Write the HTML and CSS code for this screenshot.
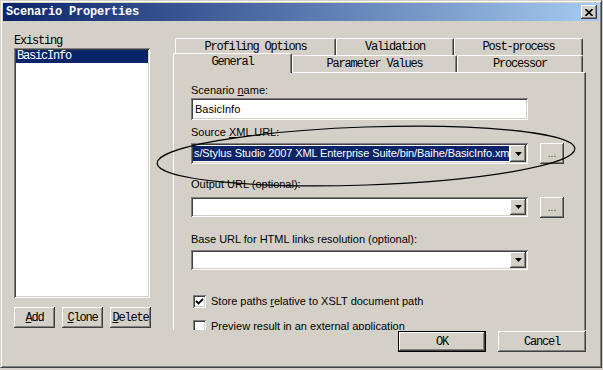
FILE: index.html
```html
<!DOCTYPE html>
<html lang="en">
<head>
  <meta charset="UTF-8">
  <title>Scenario Properties</title>
  <link rel="stylesheet" href="styles.css">
</head>
<body>
  <div class="window">
    <div class="titlebar">
      <span class="title">Scenario Properties</span>
      <button class="close-btn" type="button">
        <svg width="8" height="7" viewBox="0 0 8 7"><path d="M0.5 0 L7.5 7 M7.5 0 L0.5 7" stroke="#000" stroke-width="1.6"/></svg>
      </button>
    </div>

    <div class="content">
      <div class="scenarios">
        <div class="list-label">Existing</div>
        <div class="listbox">
          <div class="list-item selected">BasicInfo</div>
        </div>
        <div class="list-buttons">
          <button class="btn btn-small" type="button"><u>A</u>dd</button>
          <button class="btn btn-small" type="button"><u>C</u>lone</button>
          <button class="btn btn-small" type="button"><u>D</u>elete</button>
        </div>
      </div>

      <div class="props">
        <div class="tab-row tab-row-back">
          <div class="tab tab-profiling">Profiling Options</div>
          <div class="tab tab-validation">Validation</div>
          <div class="tab tab-post">Post-process</div>
        </div>
        <div class="tab-row tab-row-front">
          <div class="tab tab-general active">General</div>
          <div class="tab tab-params">Parameter Values</div>
          <div class="tab tab-processor">Processor</div>
        </div>

        <div class="panel">
          <div class="field-label">Scenario <u>n</u>ame:</div>
          <div class="textbox">BasicInfo</div>

          <div class="field-label label-source">Source <u>X</u>ML URL:</div>
          <div class="combo-row row-source">
            <div class="combo combo-tall">
              <div class="combo-text"><span class="selection">s/Stylus Studio 2007 XML Enterprise Suite/bin/Baihe/BasicInfo.xml</span></div>
              <div class="combo-arrow"><svg width="7" height="4" viewBox="0 0 7 4"><path d="M0 0 H7 L3.5 4 Z" fill="#000"/></svg></div>
            </div>
            <button class="btn btn-browse" type="button">...</button>
          </div>

          <div class="field-label label-output">Output URL (optional):</div>
          <div class="combo-row row-output">
            <div class="combo">
              <div class="combo-text"></div>
              <div class="combo-arrow"><svg width="7" height="4" viewBox="0 0 7 4"><path d="M0 0 H7 L3.5 4 Z" fill="#000"/></svg></div>
            </div>
            <button class="btn btn-browse" type="button">...</button>
          </div>

          <div class="field-label label-base">Base URL for HTML links resolution (optional):</div>
          <div class="combo-row row-base">
            <div class="combo">
              <div class="combo-text"></div>
              <div class="combo-arrow"><svg width="7" height="4" viewBox="0 0 7 4"><path d="M0 0 H7 L3.5 4 Z" fill="#000"/></svg></div>
            </div>
          </div>

          <div class="check-row check-store">
            <span class="checkbox"><svg width="9" height="9" viewBox="0 0 9 9"><path d="M1 4 L3.5 6.5 L8 2" stroke="#000" stroke-width="1.8" fill="none"/></svg></span>
            <span>Store paths <u>r</u>elative to XSLT document path</span>
          </div>
          <div class="check-row check-preview">
            <span class="checkbox"></span>
            <span>Preview result in an external application</span>
          </div>
        </div>
      </div>
    </div>

    <div class="footer">
      <button class="btn btn-wide btn-default" type="button">OK</button>
      <button class="btn btn-wide" type="button">Cancel</button>
    </div>
  </div>

  <!-- hand-drawn annotation around the source URL -->
  <svg class="annotation" width="603" height="370" viewBox="0 0 603 370">
    <ellipse cx="366" cy="156" rx="209" ry="29" transform="rotate(-2 366 156)" fill="none" stroke="#000" stroke-width="1.2"/>
  </svg>
</body>
</html>
```

FILE: styles.css
```css
body {
  margin: 0;
  background: #d4d0c8;
  font-family: "Liberation Sans", Arial, sans-serif;
  font-size: 11px;
  color: #000;
}
.window {
  width: 602px;
  height: 368px;
  box-sizing: border-box;
  padding: 2px;
  border: 1px solid;
  border-color: #d4d0c8 #404040 #404040 #d4d0c8;
  box-shadow: inset 1px 1px #fff, inset -1px -1px #808080;
  display: flex;
  flex-direction: column;
}
.titlebar {
  height: 18px;
  flex: none;
  display: flex;
  align-items: center;
  justify-content: space-between;
  padding: 0 2px 0 3px;
  background: linear-gradient(to right, #0a246a, #a6caf0);
}
.title {
  font-family: "Liberation Mono", monospace;
  font-weight: bold;
  font-size: 12px;
  letter-spacing: -0.2px;
  color: #fff;
}
.close-btn {
  width: 16px;
  height: 14px;
  padding: 0;
  border: none;
  background: #d4d0c8;
  display: flex;
  align-items: center;
  justify-content: center;
  box-shadow: inset -1px -1px #404040, inset 1px 1px #fff, inset -2px -2px #808080;
}

/* classic 3d bits */
.btn {
  padding: 0;
  border: none;
  background: #d4d0c8;
  color: #000;
  font-family: "Liberation Mono", monospace;
  font-size: 12px;
  letter-spacing: -1.2px;
  box-shadow: inset -1px -1px #404040, inset 1px 1px #fff, inset -2px -2px #808080;
}

.content {
  height: 309px;
  flex: none;
  display: flex;
}
.scenarios {
  width: 137px;
  margin-left: 11px;
  padding-top: 13px;
}
.list-label {
  height: 14px;
  line-height: 14px;
  font-family: "Liberation Mono", monospace;
  font-size: 12px;
  letter-spacing: -1.2px;
}
.listbox {
  width: 136px;
  height: 250px;
  box-sizing: border-box;
  padding: 2px;
  background: #fff;
  box-shadow: inset 1px 1px #808080, inset -1px -1px #fff, inset 2px 2px #404040, inset -2px -2px #d4d0c8;
}
.list-item {
  height: 13px;
  line-height: 13px;
  padding-left: 1px;
  font-family: "Liberation Mono", monospace;
  font-size: 12px;
  letter-spacing: -1.2px;
}
.list-item.selected {
  background: #0a246a;
  color: #fff;
}
.list-buttons {
  display: flex;
  gap: 7px;
  margin-top: 9px;
}
.btn-small {
  width: 41px;
  height: 21px;
}

.props {
  width: 413px;
  margin-left: 22px;
  padding-top: 17px;
  overflow: hidden;
}
.tab-row {
  display: flex;
  height: 17px;
  align-items: flex-start;
}
.tab-row-back {
  margin-left: 2px;
}
.tab {
  height: 17px;
  box-sizing: border-box;
  border-top: 1px solid #fff;
  border-left: 1px solid #fff;
  border-right: 1px solid #404040;
  border-radius: 2px 2px 0 0;
  box-shadow: inset -1px 0 #808080;
  background: #d4d0c8;
  text-align: center;
  line-height: 17px;
  font-family: "Liberation Mono", monospace;
  font-size: 12px;
  letter-spacing: -1.2px;
}
.tab-profiling { width: 161px; }
.tab-validation { width: 118px; }
.tab-post { width: 129px; }
.tab-general { width: 119px; }
.tab-params { width: 165px; }
.tab-processor { width: 126px; }
.tab.active {
  position: relative;
  z-index: 1;
  height: 20px;
  margin-top: -2px;
  line-height: 16px;
}

.panel {
  width: 413px;
  height: 300px;
  box-sizing: border-box;
  border-top: 1px solid #fff;
  border-left: 1px solid #fff;
  border-right: 1px solid #404040;
  box-shadow: inset -1px 0 #808080;
  padding: 10px 0 0 17px;
}
.field-label {
  height: 14px;
  line-height: 14px;
}
.textbox {
  width: 337px;
  height: 22px;
  margin-top: 1px;
  box-sizing: border-box;
  padding: 0 4px;
  line-height: 22px;
  background: #fff;
  box-shadow: inset 1px 1px #808080, inset -1px -1px #fff, inset 2px 2px #404040, inset -2px -2px #d4d0c8;
}
.label-source { margin-top: 5px; }
.label-output { margin-top: 13px; }
.label-base { margin-top: 14px; }
.row-source { margin-top: 4px; }
.row-output { margin-top: 6px; }
.row-base { margin-top: 4px; }

.combo-row {
  display: flex;
  align-items: flex-start;
}
.combo {
  width: 337px;
  height: 20px;
  box-sizing: border-box;
  padding: 2px;
  display: flex;
  background: #fff;
  box-shadow: inset 1px 1px #808080, inset -1px -1px #fff, inset 2px 2px #404040, inset -2px -2px #d4d0c8;
}
.combo-tall {
  height: 21px;
}
.combo-text {
  flex: 1;
  overflow: hidden;
  white-space: nowrap;
  padding-right: 1px;
}
.selection {
  display: block;
  height: 15px;
  margin-top: 1px;
  line-height: 15px;
  padding-left: 1px;
  letter-spacing: -0.1px;
  background: #0a246a;
  color: #fff;
}
.combo-arrow {
  width: 16px;
  flex: none;
  display: flex;
  align-items: center;
  justify-content: center;
  background: #d4d0c8;
  box-shadow: inset -1px -1px #404040, inset 1px 1px #fff, inset -2px -2px #808080;
}
.btn-browse {
  width: 24px;
  height: 21px;
  margin-left: 12px;
  font-family: "Liberation Sans", Arial, sans-serif;
  letter-spacing: 0;
  font-size: 10px;
  color: #404040;
}

.check-row {
  display: flex;
  align-items: center;
  gap: 5px;
  margin-left: 2px;
  height: 14px;
}
.check-store { margin-top: 24px; }
.check-preview { margin-top: 11px; }
.checkbox {
  width: 13px;
  height: 13px;
  flex: none;
  box-sizing: border-box;
  display: flex;
  align-items: center;
  justify-content: center;
  background: #fff;
  box-shadow: inset 1px 1px #808080, inset -1px -1px #fff, inset 2px 2px #404040, inset -2px -2px #d4d0c8;
}

.footer {
  display: flex;
  justify-content: flex-end;
  gap: 12px;
  padding: 1px 13px 0 0;
}
.btn-wide {
  width: 88px;
  height: 21px;
}
.btn-default {
  border: 1px solid #000;
}

.annotation {
  position: absolute;
  top: 0;
  left: 0;
  pointer-events: none;
}
```
